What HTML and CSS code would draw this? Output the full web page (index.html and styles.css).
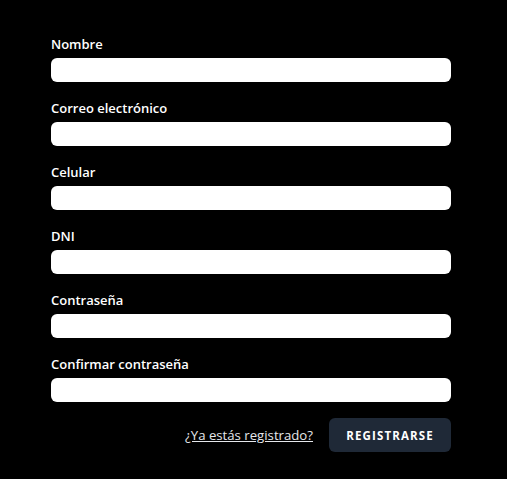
FILE: index.html
```html
<!DOCTYPE html>
<html lang="es">
<head>
<meta charset="utf-8">
<link rel="stylesheet" href="styles.css">
</head>
<body>
<form class="form">
  <div class="field">
    <label class="label">Nombre</label>
    <input class="input" type="text">
  </div>
  <div class="field">
    <label class="label">Correo electrónico</label>
    <input class="input" type="email">
  </div>
  <div class="field">
    <label class="label">Celular</label>
    <input class="input" type="text">
  </div>
  <div class="field">
    <label class="label">DNI</label>
    <input class="input" type="text">
  </div>
  <div class="field">
    <label class="label">Contraseña</label>
    <input class="input" type="password">
  </div>
  <div class="field">
    <label class="label">Confirmar contraseña</label>
    <input class="input" type="password">
  </div>
  <div class="actions">
    <a class="link" href="#">¿Ya estás registrado?</a>
    <button class="button" type="button">Registrarse</button>
  </div>
</form>
</body>
</html>
```
FILE: styles.css
```css
html, body {
  margin: 0;
  padding: 0;
  background: #000;
}
body {
  font-family: "Open Sans", "Noto Sans", sans-serif;
  padding: 34px 0 0 51px;
}
.form {
  width: 400px;
  display: flex;
  flex-direction: column;
  gap: 16px;
  margin: 0;
}
.field {
  display: flex;
  flex-direction: column;
  gap: 4px;
}
.label {
  color: #fff;
  font-size: 13px;
  font-weight: 600;
  line-height: 20px;
  height: 20px;
}
.input {
  box-sizing: border-box;
  height: 24px;
  width: 100%;
  border: none;
  border-radius: 6px;
  background: #fff;
  margin: 0;
  padding: 0 8px;
}
.actions {
  display: flex;
  justify-content: flex-end;
  align-items: center;
  gap: 16px;
}
.link {
  color: #e5e7eb;
  font-size: 13.2px;
  line-height: 20px;
  text-decoration: underline;
}
.button {
  box-sizing: border-box;
  width: 122px;
  height: 34px;
  padding: 0;
  background: #1f2937;
  color: #fff;
  border: none;
  border-radius: 6px;
  font-family: "Open Sans", sans-serif;
  font-size: 11.5px;
  font-weight: 700;
  letter-spacing: 0.1em;
  text-transform: uppercase;
}
```
